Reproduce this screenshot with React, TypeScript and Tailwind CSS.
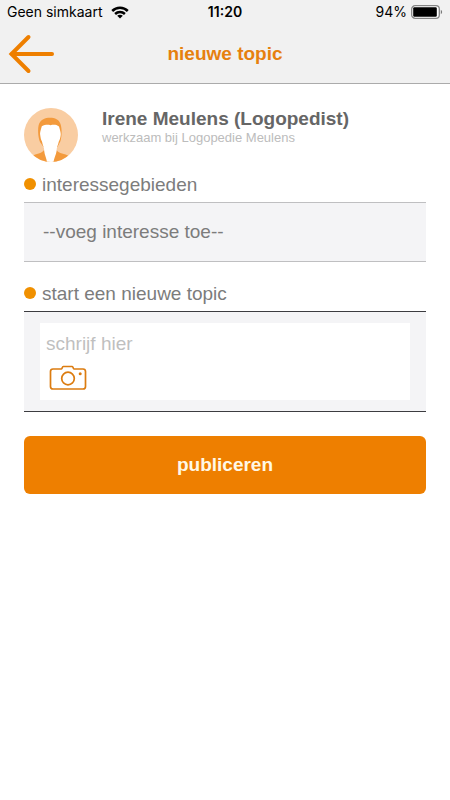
import type { ReactNode } from "react";

function WifiIcon() {
  return (
    <svg viewBox="0 0 18 13" className="h-[13px] w-[18px]" fill="none" stroke="#000" strokeWidth="2.5" aria-hidden="true">
      <path d="M1.200 5C5.500.8 12.500.8 16.800 5" />
      <path d="M4.100 8C6.900 5.400 11.100 5.400 13.900 8" />
      <path d="M9 12.600 6.200 9.800C7.700 8.400 10.300 8.400 11.800 9.800Z" fill="#000" stroke="none" />
    </svg>
  );
}

function BatteryIcon() {
  return (
    <svg viewBox="0 0 32 14" className="h-[14px] w-8" aria-hidden="true">
      <rect x="0.700" y="0.700" width="27.600" height="12.600" rx="3.400" fill="#fff" stroke="#858585" strokeWidth="1.300" />
      <rect x="2.200" y="2.200" width="23.600" height="9.600" rx="1.200" fill="#000" />
      <path d="M29.800 4.800C31.600 5.500 31.600 8.500 29.800 9.200Z" fill="#777" />
    </svg>
  );
}

function BackArrow() {
  return (
    <svg viewBox="0 0 46 40" className="h-10 w-[46px]" fill="none" stroke="#ee7f00" strokeWidth="4" strokeLinecap="round" strokeLinejoin="miter" aria-hidden="true">
      <path d="M20.500 3 3.500 20 20.500 37" />
      <path d="M4 20H44" />
    </svg>
  );
}

function Avatar() {
  return (
    <svg viewBox="0 0 54 54" className="size-[54px] shrink-0" role="img" aria-label="Irene Meulens">
      <clipPath id="avatar-circle">
        <circle cx="27" cy="27" r="27" />
      </clipPath>
      <g clipPath="url(#avatar-circle)">
        <rect width="54" height="54" fill="#f9cda2" />
        <path d="M8 48C12 45.500 18 45.500 19.500 42.500H33C34.500 45.500 41 45.500 45 48L40 54H13Z" fill="#f39a3c" />
        <path d="M16 34C14 29 13.500 20 15 16 17 11.500 21 9.800 26 9.800 31 9.800 35 11.500 36.500 16 38 20 38 28 36.500 33L33.500 39H19.500Z" fill="#f39a3c" />
        <path d="M16.200 27C15.800 25 16.500 23 17 21L17.800 18.200C21 16.600 24 16.600 26.500 17.200 29.500 16.600 32.500 16.600 35 18.500L36 22C36.500 24 37.200 26 36.500 28.500 36 30.500 35.800 32 34.800 33.500 34.300 36.500 32.500 39 32.500 43.500 32 47 30 50 29.500 54H23C22.500 50 20.500 47 20.300 43.500 20.300 39 18.500 37 18 33.500 17 32 16.500 29.500 16.200 27Z" fill="#fff" />
      </g>
    </svg>
  );
}

function CameraIcon() {
  return (
    <svg viewBox="0 0 38 26" className="h-[26px] w-[38px]" fill="none" stroke="#dc7c10" strokeWidth="1.700" strokeLinejoin="round" aria-hidden="true">
      <path d="M4 4H12.500C13.300 4 13.200 1.500 14.200 1.500H23.200C24.200 1.500 24.100 4 24.900 4H34Q36.500 4 36.500 6.500V21.500Q36.500 24 34 24H4Q1.500 24 1.500 21.500V6.500Q1.500 4 4 4Z" />
      <circle cx="19" cy="13.500" r="6.300" />
      <circle cx="31.200" cy="8.700" r="1.500" fill="#dc7c10" stroke="none" />
    </svg>
  );
}

function FieldLabel({ htmlFor, children }: { htmlFor: string; children: ReactNode }) {
  return (
    <label htmlFor={htmlFor} className="flex items-start gap-1.5 pb-[5px] text-[19px] leading-6 text-[#7c7c7c]">
      <span className="mt-[5px] size-3 rounded-full bg-[#f09000]" />
      {children}
    </label>
  );
}

export default function App() {
  return (
    <div className="min-h-screen bg-white font-['Liberation_Sans',Arial,sans-serif]">
      <header className="border-b border-[#ababab] bg-[#f1f1f1]">
        <div className="grid h-6 grid-cols-[1fr_auto_1fr] items-center px-[7px] font-[Inter,sans-serif] text-sm text-black">
          <span className="flex items-center gap-2">
            Geen simkaart
            <WifiIcon />
          </span>
          <span className="font-semibold">11:20</span>
          <span className="flex items-center justify-end gap-1">
            94%
            <BatteryIcon />
          </span>
        </div>
        <div className="grid h-[59px] grid-cols-[1fr_auto_1fr] items-center px-2">
          <button type="button" aria-label="terug" className="justify-self-start">
            <BackArrow />
          </button>
          <h1 className="text-[19px] leading-6 font-bold text-[#e6800e]">nieuwe topic</h1>
        </div>
      </header>

      <main className="px-6 pt-6">
        <div className="flex gap-6">
          <Avatar />
          <div>
            <h2 className="text-[19px] leading-[22px] font-bold text-[#666]">Irene Meulens (Logopedist)</h2>
            <p className="text-[13px] leading-4 text-[#bcbcbc]">werkzaam bij Logopedie Meulens</p>
          </div>
        </div>

        <form>
          <div className="mt-[11px]">
            <FieldLabel htmlFor="interest">interessegebieden</FieldLabel>
            <select
              id="interest"
              className="block h-[60px] w-full appearance-none rounded-none border-y border-[#bfbfc1] bg-[#f4f4f6] px-[19px] text-[19px] text-[#7c7c7c]"
            >
              <option>--voeg interesse toe--</option>
            </select>
          </div>

          <div className="mt-5">
            <FieldLabel htmlFor="topic">start een nieuwe topic</FieldLabel>
            <div className="border-y border-[#3c3c40] bg-[#f4f4f6] px-4 py-[11px]">
              <div className="bg-white px-1.5 pt-[9px] pb-2">
                <textarea
                  id="topic"
                  rows={1}
                  placeholder="schrijf hier"
                  className="block h-6 w-full resize-none overflow-hidden text-[19px] leading-6 text-[#7c7c7c] outline-none placeholder:text-[#bfbfbf]"
                />
                <button type="button" aria-label="foto toevoegen" className="mt-[9px] ml-[3px] block pb-px">
                  <CameraIcon />
                </button>
              </div>
            </div>
          </div>

          <button type="button" className="mt-6 block h-[58px] w-full rounded-md bg-[#ee7f00] text-[19px] font-bold text-[#fff8e6]">
            publiceren
          </button>
        </form>
      </main>
    </div>
  );
}
